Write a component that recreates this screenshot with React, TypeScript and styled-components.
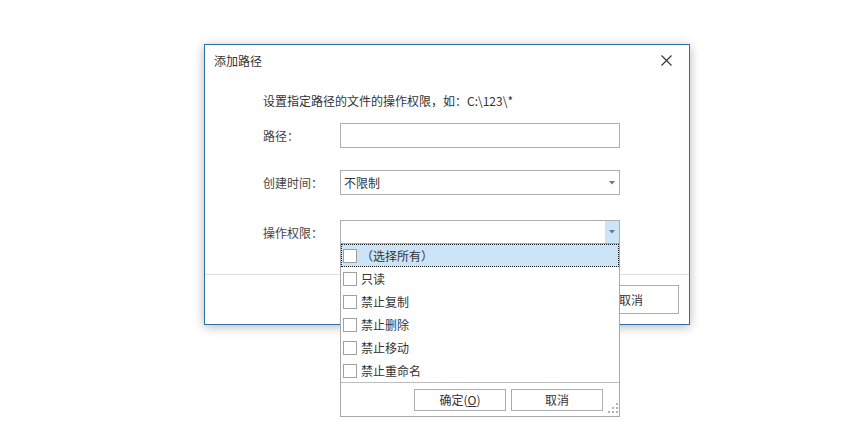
import React from 'react';
import styled, { createGlobalStyle } from 'styled-components';

const GlobalStyle = createGlobalStyle`
  html, body {
    margin: 0;
    padding: 0;
    background: #ffffff;
  }

  body {
    color: #333333;
    font-family: "Noto Sans CJK SC", "Noto Sans", "Liberation Sans", sans-serif;
    font-size: 12px;
  }
`;

const Page = styled.div`
  box-sizing: border-box;
  height: 443px;
  overflow: hidden;
  padding: 44px 0 0 204px;
  width: 854px;
`;

const Dialog = styled.div`
  background: #ffffff;
  border: 1px solid #2f6ea5;
  box-shadow: 0 2px 10px rgba(0, 0, 0, .28);
  box-sizing: border-box;
  display: flex;
  flex-direction: column;
  height: 281px;
  width: 486px;
`;

const TitleBar = styled.div`
  align-items: center;
  display: flex;
  height: 30px;
  justify-content: space-between;
  padding: 0 17px 0 9px;
`;

const Title = styled.span`
  color: #333333;
  font-size: 12px;
`;

const CloseButton = styled.button`
  background: none;
  border: 0;
  cursor: pointer;
  display: flex;
  padding: 0;
`;

const Body = styled.div`
  display: flex;
  flex: 1;
  flex-direction: column;
  padding: 17px 0 0 58px;
`;

const Hint = styled.p`
  color: #333333;
  line-height: 18px;
  margin: 0 0 13px;
`;

const Row = styled.div<{ $top?: number }>`
  align-items: center;
  display: flex;
  margin-top: ${(p) => p.$top || 0}px;
`;

const Label = styled.span`
  color: #444444;
  width: 77px;
`;

const TextInput = styled.div<{ $h?: number }>`
  background: #ffffff;
  border: 1px solid #abadb3;
  box-sizing: border-box;
  height: ${(p) => p.$h || 25}px;
  width: 280px;
`;

const Select = styled.div<{ $h?: number }>`
  align-items: stretch;
  background: #ffffff;
  border: 1px solid #abadb3;
  box-sizing: border-box;
  display: flex;
  height: ${(p) => p.$h || 25}px;
  position: relative;
  width: 280px;
`;

const SelectValue = styled.span`
  align-items: center;
  color: #333333;
  display: flex;
  flex: 1;
  padding-left: 3px;
`;

const ArrowZone = styled.span<{ $active?: boolean }>`
  align-items: center;
  background: ${(p) => (p.$active ? '#cce4f7' : 'transparent')};
  display: flex;
  justify-content: center;
  width: 14px;
`;

const Footer = styled.div`
  align-items: center;
  border-top: 1px solid #dfdfdf;
  display: flex;
  gap: 8px;
  height: 49px;
  justify-content: flex-end;
  padding-right: 10px;
`;

const DialogButton = styled.button`
  background: #ffffff;
  border: 1px solid #adadad;
  color: #333333;
  font-family: inherit;
  font-size: 12px;
  height: 29px;
  padding: 0;
  width: 96px;
`;

const Popup = styled.div`
  background: #ffffff;
  border: 1px solid #a9a9a9;
  box-sizing: border-box;
  display: flex;
  flex-direction: column;
  left: -1px;
  position: absolute;
  top: 100%;
  width: 280px;
  z-index: 10;
`;

const OptionList = styled.div`
  display: flex;
  flex-direction: column;
`;

const Option = styled.div<{ $active?: boolean }>`
  align-items: center;
  background: ${(p) => (p.$active ? '#cce4f7' : 'transparent')};
  border: 1px ${(p) => (p.$active ? 'dotted #1a1a1a' : 'solid transparent')};
  box-sizing: border-box;
  color: #333333;
  display: flex;
  gap: 4px;
  height: 23px;
  padding-left: 1px;
`;

const CheckBox = styled.span`
  background: #ffffff;
  border: 1px solid #a0a0a0;
  box-sizing: border-box;
  height: 14px;
  width: 14px;
`;

const PopupFooter = styled.div`
  align-items: center;
  border-top: 1px solid #bdbdbd;
  display: flex;
  gap: 5px;
  height: 33px;
  justify-content: flex-end;
  padding-right: 1px;
`;

const PopupButton = styled.button`
  background: #ffffff;
  border: 1px solid #adadad;
  color: #333333;
  font-family: inherit;
  font-size: 12px;
  height: 22px;
  padding: 0;
  width: 92px;
`;

const Grip = styled.svg`
  align-self: flex-end;
  margin: 0 0 3px 0;
`;

const Arrow = () => (
  <svg width="6" height="4" viewBox="0 0 6 4">
    <path d="M0 0h6L3 3.5z" fill="#777777" />
  </svg>
);

const options = ['只读', '禁止复制', '禁止删除', '禁止移动', '禁止重命名'];

const App: React.FC = () => (
  <Page>
    <GlobalStyle />
    <Dialog>
      <TitleBar>
        <Title>添加路径</Title>
        <CloseButton aria-label="close">
          <svg width="11" height="11" viewBox="0 0 11 11">
            <path d="M0.5 0.5l10 10M10.5 0.5l-10 10" stroke="#333333" strokeWidth="1.1" />
          </svg>
        </CloseButton>
      </TitleBar>
      <Body>
        <Hint>设置指定路径的文件的操作权限，如：C:\123\*</Hint>
        <Row>
          <Label>路径：</Label>
          <TextInput />
        </Row>
        <Row $top={22}>
          <Label>创建时间：</Label>
          <Select>
            <SelectValue>不限制</SelectValue>
            <ArrowZone><Arrow /></ArrowZone>
          </Select>
        </Row>
        <Row $top={25}>
          <Label>操作权限：</Label>
          <Select $h={24}>
            <SelectValue />
            <ArrowZone $active><Arrow /></ArrowZone>
            <Popup>
              <OptionList>
                <Option $active>
                  <CheckBox />
                  <span>（选择所有）</span>
                </Option>
                {options.map((name) => (
                  <Option key={name}>
                    <CheckBox />
                    <span>{name}</span>
                  </Option>
                ))}
              </OptionList>
              <PopupFooter>
                <PopupButton>确定(<u>O</u>)</PopupButton>
                <PopupButton>取消</PopupButton>
                <Grip width="10" height="10" viewBox="0 0 10 10">
                  <g fill="#b0b0b0">
                    <rect x="8" y="0" width="2" height="2" />
                    <rect x="4" y="4" width="2" height="2" />
                    <rect x="8" y="4" width="2" height="2" />
                    <rect x="0" y="8" width="2" height="2" />
                    <rect x="4" y="8" width="2" height="2" />
                    <rect x="8" y="8" width="2" height="2" />
                  </g>
                </Grip>
              </PopupFooter>
            </Popup>
          </Select>
        </Row>
      </Body>
      <Footer>
        <DialogButton>确定</DialogButton>
        <DialogButton>取消</DialogButton>
      </Footer>
    </Dialog>
  </Page>
);

export default App;
